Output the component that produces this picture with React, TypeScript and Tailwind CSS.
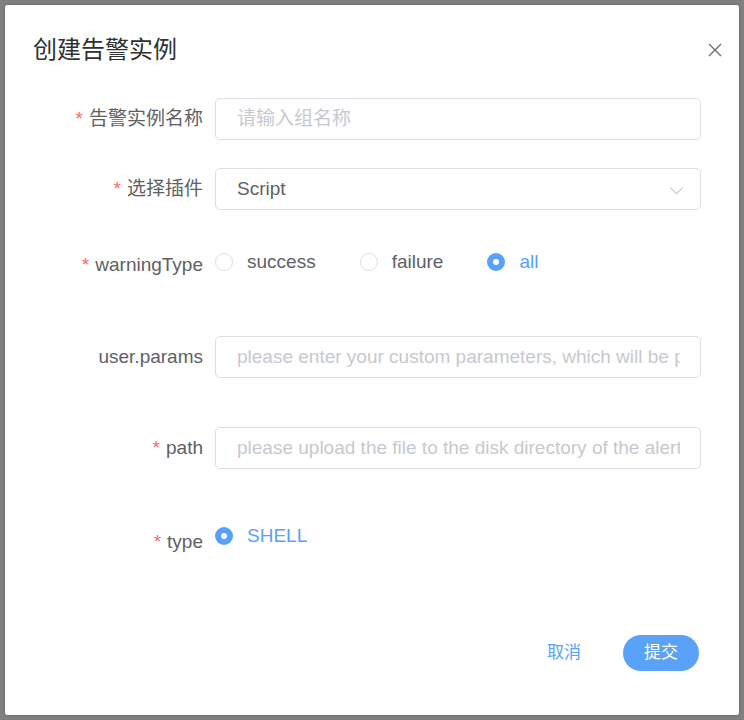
import React from 'react';

const font = { fontFamily: '"Liberation Sans", "Noto Sans CJK SC", sans-serif' };

const Label: React.FC<{ text: string; required?: boolean; offset?: boolean }> = ({ text, required, offset }) => (
    <div className={`w-[210px] shrink-0 pr-[12px] text-right text-[19px] text-[#5e6066] leading-[42px] ${offset ? 'pt-[6px]' : ''}`}>
        {required && <span className="text-[#f56c6c] mr-[6px]">*</span>}
        {text}
    </div>
);

const Radio: React.FC<{ label: string; checked?: boolean }> = ({ label, checked }) => (
    <div className="flex items-center mr-[44px]">
        {checked ? (
            <span className="w-[18px] h-[18px] rounded-full bg-[#58a1f8] flex items-center justify-center">
                <span className="w-[6px] h-[6px] rounded-full bg-white" />
            </span>
        ) : (
            <span className="w-[18px] h-[18px] rounded-full border border-[#dcdfe6] bg-white" />
        )}
        <span className={`ml-[14px] text-[19px] ${checked ? 'text-[#58a1f8]' : 'text-[#5e6066]'}`}>{label}</span>
    </div>
);

const TextInput: React.FC<{ placeholder?: string; value?: string; select?: boolean }> = ({ placeholder, value, select }) => (
    <div className="relative flex-1 h-[42px] border border-[#dcdfe6] rounded-[5px] bg-white flex items-center pl-[21px] pr-[20px] overflow-hidden">
        <span className={`whitespace-nowrap overflow-hidden text-[19px] ${value ? 'text-[#5e6066]' : 'text-[#c6c9cf]'}`}>
            {value || placeholder}
        </span>
        {select && (
            <svg className="absolute right-[16px] top-[14px]" width="15" height="15" viewBox="0 0 16 16" fill="none">
                <path d="M1.5 5l6.5 6.5L14.5 5" stroke="#c0c4cc" strokeWidth="1.2" />
            </svg>
        )}
    </div>
);

const App: React.FC = () => {
    return (
        <div className="w-[744px] h-[720px] bg-[#7f7f7f] pt-[5px] pl-[5px]" style={font}>
            <div className="w-[734px] h-[710px] bg-white rounded-[2px] shadow-[0_0_2px_rgba(0,0,0,0.5)] flex flex-col">
                <div className="flex items-center justify-between pt-[29px] pl-[28px] pr-[17px]">
                    <h2 className="text-[24px] leading-[32px] text-[#303133]">创建告警实例</h2>
                    <svg width="14" height="14" viewBox="0 0 14 14" fill="none">
                        <path d="M1 1l12 12M13 1L1 13" stroke="#6b6e75" strokeWidth="1.4" />
                    </svg>
                </div>

                <div className="flex flex-col pr-[38px] mt-[32px]">
                    <div className="flex items-start">
                        <Label text="告警实例名称" required />
                        <TextInput placeholder="请输入组名称" />
                    </div>
                    <div className="flex items-start mt-[28px]">
                        <Label text="选择插件" required />
                        <TextInput value="Script" select />
                    </div>
                    <div className="flex items-start mt-[28px] h-[48px]">
                        <Label text="warningType" required offset />
                        <div className="flex items-center h-[48px]">
                            <Radio label="success" />
                            <Radio label="failure" />
                            <Radio label="all" checked />
                        </div>
                    </div>
                    <div className="flex items-start mt-[50px]">
                        <Label text="user.params" />
                        <TextInput placeholder="please enter your custom parameters, which will be pa" />
                    </div>
                    <div className="flex items-start mt-[49px]">
                        <Label text="path" required />
                        <TextInput placeholder="please upload the file to the disk directory of the alert" />
                    </div>
                    <div className="flex items-start mt-[46px]">
                        <Label text="type" required offset />
                        <div className="flex items-center h-[42px]">
                            <Radio label="SHELL" checked />
                        </div>
                    </div>
                </div>

                <div className="flex items-center justify-end pr-[40px] mt-[72px]">
                    <button className="text-[17px] text-[#58a1f8] px-[6px] mr-[36px]">取消</button>
                    <button className="w-[76px] h-[36px] rounded-full bg-[#5aa2f8] text-white text-[17px]">提交</button>
                </div>
            </div>
        </div>
    );
};

export default App;
